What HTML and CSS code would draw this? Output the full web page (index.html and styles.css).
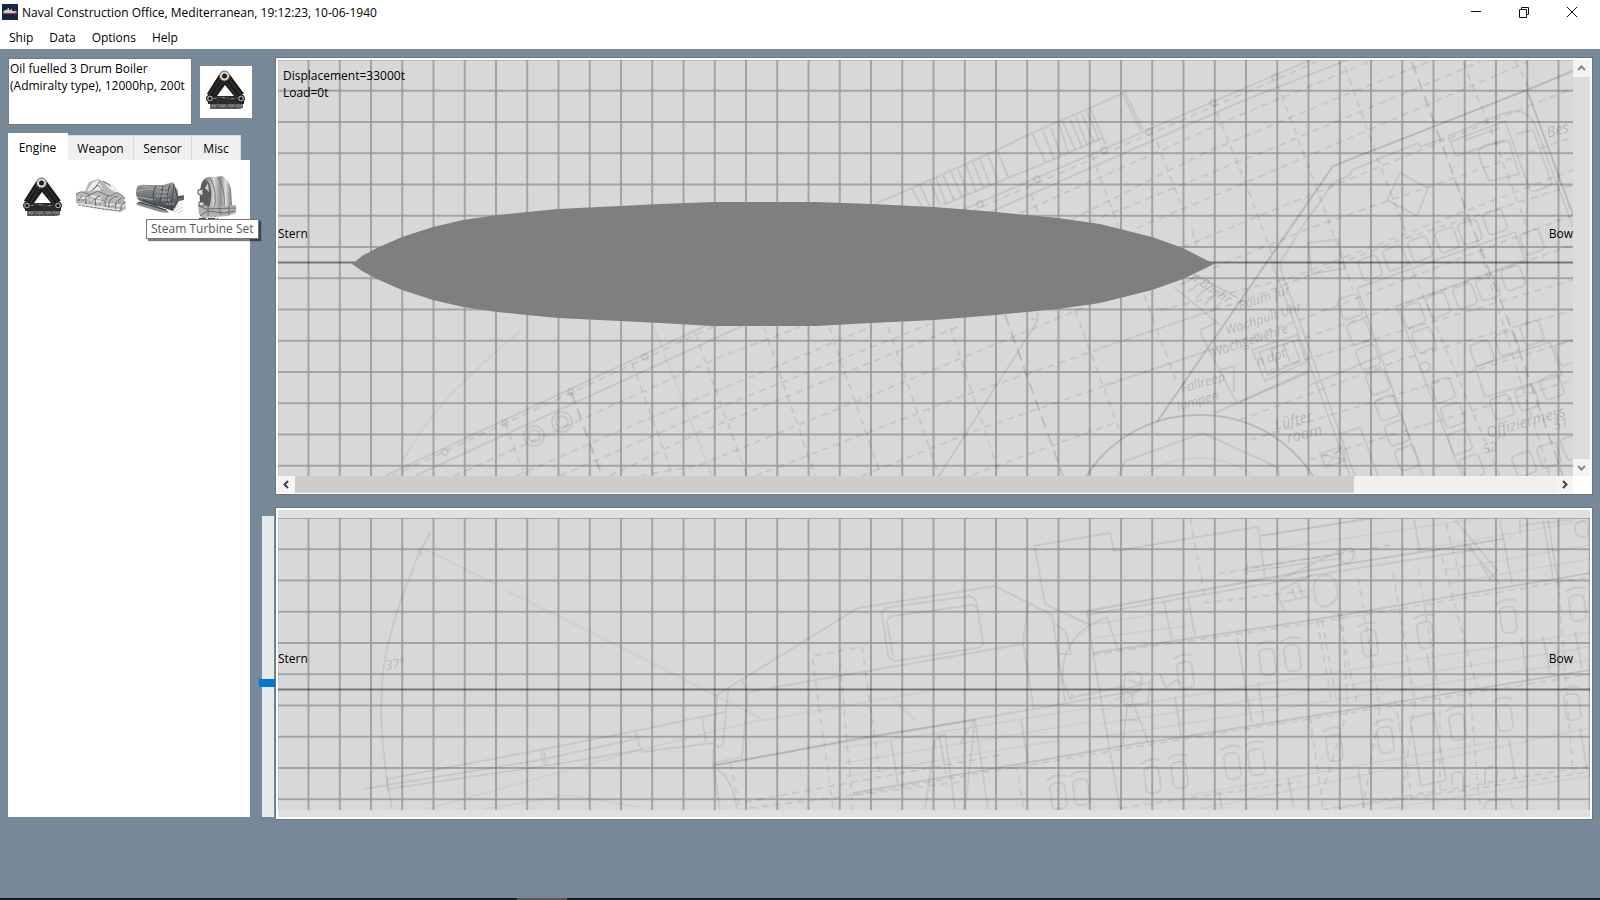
FILE: index.html
```html
<!DOCTYPE html>
<html lang="en">
<head>
  <meta charset="UTF-8" />
  <meta name="viewport" content="width=device-width, initial-scale=1.0"/>
  <title>Naval Construction Office</title>
  <link rel="stylesheet" href="styles.css">
</head>
<body>
  <!-- shared shapes -->
  <svg class="defs" width="0" height="0" aria-hidden="true">
    <defs>
      <linearGradient id="steel" x1="0" y1="0" x2="0" y2="1">
        <stop offset="0" stop-color="#9a9c9e"/>
        <stop offset="0.4" stop-color="#7b7e81"/>
        <stop offset="1" stop-color="#3b3e41"/>
      </linearGradient>
      <linearGradient id="drum" x1="0" y1="0" x2="1" y2="0">
        <stop offset="0" stop-color="#4a4a4a"/>
        <stop offset="0.45" stop-color="#d6d6d6"/>
        <stop offset="0.65" stop-color="#8c8c8c"/>
        <stop offset="0.8" stop-color="#e0e0e0"/>
        <stop offset="1" stop-color="#6e6e6e"/>
      </linearGradient>
      <pattern id="grid-top" x="276.25" y="58.5" width="31.25" height="31.25" patternUnits="userSpaceOnUse">
        <path class="grid-soft" d="M0 1H31.25M1 0V31.25"/>
        <path class="grid-line" d="M0 1H31.25M1 0V31.25"/>
      </pattern>
      <pattern id="grid-side" x="276.25" y="517" width="31.25" height="31.25" patternUnits="userSpaceOnUse">
        <path class="grid-soft" d="M0 1H31.25M1 0V31.25"/>
        <path class="grid-line" d="M0 1H31.25M1 0V31.25"/>
      </pattern>
      <rect id="seat" x="-10" y="-11" width="20" height="22" rx="4" transform="rotate(-20)"/>
      <g id="port" transform="rotate(-8)">
        <rect x="-7" y="-13" width="15" height="26" rx="5"/>
        <path d="M-9 -17Q0 -23 11 -18"/>
      </g>
      <symbol id="boiler" viewBox="0 0 50 50">
        <path d="M24 12L12 31M25 12L39 31" stroke="#1d1d1d" stroke-width="12"/>
        <path d="M20 13L7 32M23 15L11 33M29 13L43 32M27 17L38 32" stroke="#4a4a4a" stroke-width="1" stroke-dasharray="2 1"/>
        <path d="M25 19L17 30H34Z" fill="#fff"/>
        <path d="M8 33L15 30H36L44 33V38H8Z" fill="#2a2a2a"/>
        <path d="M10 38H43V42L38 43H10Z" fill="#6a6a68"/>
        <path d="M13 33L20 31L30 33L39 32M12 40H41" stroke="#8b8b88" stroke-width="1" stroke-dasharray="4 2 1 2" fill="none"/>
        <path d="M11 42H41M18 35V42M27 34V41M35 36V42" stroke="#3c3c3c" stroke-width="1" stroke-dasharray="3 1"/>
        <circle cx="24.500" cy="10" r="5" fill="#d8d8d6" stroke="#555"/>
        <circle cx="24.500" cy="10" r="2.500" fill="#222"/>
        <circle cx="10" cy="32.500" r="3.500" fill="#999" stroke="#111"/>
        <circle cx="10" cy="32.500" r="1.500" fill="#111"/>
        <circle cx="41" cy="32.500" r="3.500" fill="#999" stroke="#111"/>
        <circle cx="41" cy="32.500" r="1.500" fill="#111"/>
      </symbol>
      <symbol id="diesel" viewBox="0 0 50 50">
        <path d="M0 20L9 18L13 9L22 6L34 11L37 17L48 23L50 36L44 39L30 37L12 34L0 30Z" fill="#b8b8b6"/>
        <path d="M11 18L16 10L22 7L27 17ZM29 11L35 17L44 21L38 12Z" fill="#ededeb"/>
        <path d="M15 18L22 12L27 18M24 8L17 17M27 8L35 13" stroke="#7a7a78" fill="none"/>
        <path d="M3 25H12M14 27L27 29M29 31L48 33M4 31L44 37M15 23L25 25" stroke="#e4e4e2" stroke-width="2"/>
        <path d="M0 22Q4 17 9 20T18 20T28 21T38 21T49 26" stroke="#777" fill="none"/>
        <path d="M2 28L6 23M10 31Q8 23 14 22M20 33Q17 24 24 23M30 34Q27 27 33 22M33 35Q31 25 42 23M40 36Q37 29 46 25M45 37Q44 30 50 29" stroke="#6a6a68" fill="none"/>
        <path d="M1 27H8M13 30L19 26M23 32L28 26M35 34L46 28M2 32L27 36L46 38" stroke="#7d7d7b" fill="none" stroke-dasharray="3 1"/>
      </symbol>
      <symbol id="turbine" viewBox="0 0 50 50">
        <path d="M1 30L9 28L32 37L34 40L25 39L2 32Z" fill="#8b8e90"/>
        <path d="M2 14Q4 11 12 12L28 12L38 9L43 18L43 23L49 22V27L44 28L38 38L29 35L5 28Q-1 24 2 14Z" fill="url(#steel)"/>
        <path d="M1 19Q9 15 21 17M2 24L20 27M6 13L18 15" stroke="#a7aaac" fill="none"/>
        <path d="M21 13Q16 20 20 31M28 13L24 33M35 12Q30 22 33 36M39 11L36 34M40 15L43 28" stroke="#45494c" fill="none"/>
        <path d="M22 15H34M22 19H34M21 23H32M27 27H35M31 31H39" stroke="#babdc0" stroke-dasharray="2 1"/>
        <path d="M3 29L31 37M43 24H48M8 27L22 33" stroke="#33373a"/>
        <path d="M39 39L48 34M43 40L48 37M38 36L44 33" stroke="#999" stroke-dasharray="1 1"/>
      </symbol>
      <symbol id="gearbox" viewBox="0 0 50 50">
        <path d="M8 9Q11 3 20 4L28 3Q34 5 37 16L38 34L33 41L12 40L6 31Q5 17 8 9Z" fill="url(#drum)"/>
        <path d="M8 10Q12 4 16 12Q19 23 15 34L8 33Q5 20 8 10Z" fill="#5c5c5c"/>
        <path d="M11 15L14 10L15 19Z" fill="#ccc"/>
        <path d="M16 5Q24 18 20 37M24 4Q32 17 30 36" stroke="#777" fill="none"/>
        <path d="M4 32L10 31L14 34L30 33L42 32V40L34 43L8 45L5 41Z" fill="#b2b2b0"/>
        <path d="M5 33L12 36L42 35M6 43L13 38L30 40L41 38M14 34V43M25 34L27 42M35 33V42" stroke="#6c6c6a" fill="none"/>
        <path d="M4 17L9 16V23L4 21ZM5 29H10V33H5Z" fill="#ddd" stroke="#555"/>
        <path d="M5 46H24" stroke="#444" stroke-width="2" stroke-dasharray="7 2"/>
      </symbol>
    </defs>
  </svg>

  <header class="title-bar">
    <svg class="app-icon" viewBox="0 0 16 16" aria-hidden="true">
      <rect width="16" height="16" fill="#14264a"/>
      <path d="M1 8L3 6H5L6 4H7V6H9V5H10V7H14L15 8L14 9H2Z" fill="#c8ced8"/>
      <path d="M1 9H15L14 10H2Z" fill="#c23a36"/>
      <path d="M13 2V14" stroke="#97384a" stroke-dasharray="1 2"/>
    </svg>
    <h1>Naval Construction Office, Mediterranean, 19:12:23, 10-06-1940</h1>
    <div class="window-buttons">
      <button type="button" aria-label="Minimize">
        <svg viewBox="0 0 12 12"><path d="M1 5.500H11"/></svg>
      </button>
      <button type="button" aria-label="Restore">
        <svg viewBox="0 0 12 12"><path d="M1.500 3.500H8.500V11.500H1.500ZM3.500 3.500V1.500H10.500V8.500H8.500"/></svg>
      </button>
      <button type="button" aria-label="Close">
        <svg viewBox="0 0 12 12"><path d="M1 1L11 11M11 1L1 11"/></svg>
      </button>
    </div>
  </header>

  <nav class="menu">
    <button type="button">Ship</button>
    <button type="button">Data</button>
    <button type="button">Options</button>
    <button type="button">Help</button>
  </nav>

  <main class="workspace">
    <aside class="parts">
      <div class="selected">
        <textarea class="part-info" aria-label="Selected part" readonly>Oil fuelled 3 Drum Boiler (Admiralty type), 12000hp, 200t</textarea>
        <div class="part-picture"><svg class="part"><use href="#boiler"/></svg></div>
      </div>

      <div class="tabs" role="tablist">
        <button type="button" role="tab" class="tab active" aria-selected="true">Engine</button>
        <button type="button" role="tab" class="tab tab-weapon" aria-selected="false">Weapon</button>
        <button type="button" role="tab" class="tab tab-sensor" aria-selected="false">Sensor</button>
        <button type="button" role="tab" class="tab tab-misc" aria-selected="false">Misc</button>
      </div>
      <div class="part-list" role="tabpanel">
        <button type="button" aria-label="Boiler"><svg class="part"><use href="#boiler"/></svg></button>
        <button type="button" aria-label="Diesel engine"><svg class="part"><use href="#diesel"/></svg></button>
        <button type="button" class="hovered" aria-label="Steam turbine">
          <svg class="part"><use href="#turbine"/></svg>
          <span class="tooltip" role="tooltip">Steam Turbine Set</span>
        </button>
        <button type="button" aria-label="Gearbox"><svg class="part"><use href="#gearbox"/></svg></button>
      </div>
    </aside>

    <div class="views">
      <section class="view view-top">
        <svg class="sheet" viewBox="278 60 1295 416" role="img" aria-label="Deck plan">
          <g class="plan">
            <!-- deck edge -->
            <path d="M385 476L703 327L967 208L1310 60M415 476L740 327L993 211L1240 102L1347 60"/>
            <path class="dash" d="M392 476L706 330L970 212L1316 62"/>
            <g>
              <circle cx="445" cy="452" r="3"/><circle cx="505" cy="423" r="3"/><circle cx="571" cy="392" r="3"/>
              <circle cx="645" cy="357" r="3"/><circle cx="980" cy="204" r="3"/><circle cx="1037" cy="179" r="3"/>
              <circle cx="1104" cy="150" r="3"/><circle cx="1149" cy="132" r="3"/><circle cx="1213" cy="103" r="3"/>
              <circle cx="1275" cy="77" r="3"/>
              <circle cx="534" cy="436" r="10"/><circle cx="534" cy="436" r="6"/>
              <circle cx="562" cy="422" r="10"/><circle cx="562" cy="422" r="6"/>
            </g>
            <path class="faint" d="M403 460Q430 413 463 383Q490 355 522 330"/>
            <path d="M939 476L1038 320L1031 319M1038 320L1037 312"/>
            <!-- ladders -->
            <path d="M875 204L912 188L997 150L1032 133L1090 108L1125 92L1143 130M1123 94L1141 132M943 205L1008 178L1045 163L1103 138M912 188L922 207M997 150L1009 179M1032 133L1046 163M1090 108L1106 145"/>
            <path d="M920 185L930 207M930 181L940 205M936 178L946 204M943 175L954 200M951 172L962 197M958 169L968 194M966 165L976 191M973 162L983 188M980 159L990 185M988 155L998 182M1043 131L1054 159M1051 128L1061 156M1059 123L1068 152M1063 122L1075 150M1070 119L1082 147M1076 117L1087 145M1082 114L1094 142M1087 112L1099 140"/>
            <!-- planking -->
            <path class="dash" d="M454 476L600 411L720 357L800 327M516 476L640 422L780 365L870 327M560 476L700 415L930 324M610 476L700 432L960 326M640 476L700 465L860 400L1030 330L1130 288M755 476L960 397L1213 310M862 476L982 428L1210 350M972 475L1117 422M1020 213L1173 145L1233 118L1373 60M1060 225L1200 155L1340 97L1433 60M1090 222L1280 145L1480 62M1137 228L1240 185L1527 62M1183 247L1330 187L1573 88M1213 268L1310 228L1573 137M1160 310L1290 278L1573 170M1100 348L1245 300L1400 240L1573 185M1105 385L1300 320L1573 215M1270 350L1573 245M1270 370L1573 280M1240 420L1400 360L1573 310M1250 440L1573 340M1310 460L1573 380"/>
            <path class="dash" d="M505 423L525 476M632 363L673 476M695 333L747 476M764 327L815 476M829 327L879 470M888 327L939 476M950 327L998 470M1075 310L1122 437M1144 295L1177 383M1031 194L1038 212M1092 155L1119 228M1157 142L1180 203M1192 230L1197 247M1217 113L1247 187L1278 270M1277 83L1320 197L1353 290M1345 67L1383 173L1408 237M1463 62L1492 133L1527 227M1515 60L1530 90M1408 260L1500 476M1480 250L1550 476"/>
            <path class="faint" d="M653 325L712 476"/>
            <path class="heavy" d="M571 392L602 476M1005 315L1063 476M1412 62L1467 213L1513 333L1563 476"/>
            <!-- barbette -->
            <path class="solid" d="M1086 476L1100 458A133 133 0 0 1 1200 415A133 133 0 0 1 1313 476"/>
            <path d="M1118 476L1125 461L1203 433L1277 467L1280 476"/>
            <path class="faint" d="M1143 476A95 95 0 0 1 1254 476"/>
            <!-- deckhouse -->
            <path class="solid" d="M1573 71L1527 90L1333 166L1157 422M1527 90L1573 215"/>
            <path d="M1445 138L1420 147L1418 143L1352 170L1350 175L1333 183L1300 230L1280 263L1282 273L1355 476M1270 257L1307 357L1350 476M1357 288L1423 476M1397 307L1462 476M1357 288L1515 232L1525 260L1400 305M1215 413L1310 370M1310 385L1395 350"/>
            <path d="M1448 136L1502 114Q1525 105 1535 125L1573 227M1450 142L1505 121L1530 190Q1533 194 1552 184L1533 130L1516 134M1448 137L1456 156L1505 140M1465 140L1500 128"/>
            <path d="M1400 173L1428 188L1417 216L1387 200ZM1308 243L1338 239L1345 268L1312 274ZM1485 145L1509 141L1519 174L1490 181Q1478 160 1479 150Z"/>
            <path d="M1175 288L1220 325M1190 272L1238 298M1180 285L1200 275M1188 292L1200 283M1196 298L1207 288M1204 305L1214 295M1211 312L1222 302M1200 330L1218 322M1200 332L1236 402M1220 370L1234 366L1234 392M1240 402L1310 372"/>
            <path d="M1252 350L1297 335L1306 362L1265 381ZM1259 352L1293 341L1300 361L1268 375ZM1271 350L1280 371M1284 346L1291 365M1475 367L1550 342L1562 375L1485 397ZM1320 454L1342 446L1346 460L1326 467ZM1320 454L1346 460M1342 446L1326 467M1340 434L1360 427L1378 476"/>
            <g>
              <use href="#seat" x="1370" y="268"/><use href="#seat" x="1395" y="258"/><use href="#seat" x="1420" y="249"/>
              <use href="#seat" x="1447" y="240"/><use href="#seat" x="1470" y="232"/><use href="#seat" x="1495" y="222"/>
              <use href="#seat" x="1532" y="242"/>
              <use href="#seat" x="1413" y="315"/><use href="#seat" x="1438" y="305"/><use href="#seat" x="1465" y="296"/>
              <use href="#seat" x="1488" y="288"/><use href="#seat" x="1513" y="278"/>
              <use href="#seat" x="1350" y="307"/><use href="#seat" x="1359" y="332"/><use href="#seat" x="1368" y="357"/>
              <use href="#seat" x="1378" y="382"/><use href="#seat" x="1387" y="408"/><use href="#seat" x="1397" y="433"/>
              <use href="#seat" x="1407" y="458"/>
              <use href="#seat" x="1424" y="340"/><use href="#seat" x="1443" y="390"/><use href="#seat" x="1453" y="415"/>
              <use href="#seat" x="1460" y="442"/><use href="#seat" x="1472" y="467"/>
              <use href="#seat" x="1482" y="353"/><use href="#seat" x="1507" y="343"/><use href="#seat" x="1532" y="333"/>
              <use href="#seat" x="1567" y="353"/>
              <use href="#seat" x="1502" y="407"/><use href="#seat" x="1527" y="398"/><use href="#seat" x="1552" y="387"/>
              <use href="#seat" x="1524" y="464"/><use href="#seat" x="1549" y="455"/><use href="#seat" x="1573" y="447"/>
              <circle cx="1425" cy="367" r="5"/>
            </g>
          </g>
          <g class="plan-text">
            <text transform="translate(1190 279) rotate(34)">n Bbehr</text>
            <text transform="translate(1240 310) rotate(-18)">Raum für</text>
            <text transform="translate(1227 335) rotate(-18)">Wachpult Uhr</text>
            <text transform="translate(1213 357) rotate(-18)">Wachgewehre</text>
            <text transform="translate(1258 366) rotate(-18)">n dpt</text>
            <text transform="translate(1182 393) rotate(-16)">Fallreep</text>
            <text transform="translate(1178 411) rotate(-16)">lampen</text>
            <text class="big" transform="translate(1276 430) rotate(-14)">Lüfter</text>
            <text class="big" transform="translate(1288 443) rotate(-14)">room</text>
            <text class="big" transform="translate(1548 138) rotate(-16)">Bes</text>
            <text class="big" transform="translate(1488 438) rotate(-16)">Offiziermess</text>
            <text transform="translate(1484 454) rotate(-16)">52</text>
            <text transform="translate(1555 430) rotate(-16)">51</text>
          </g>
          <rect x="278" y="60" width="1295" height="416" fill="url(#grid-top)"/>
          <path class="axis" d="M278 262.500H1573"/>
          <polygon class="hull" points="352,264 362,256 377,248 402,237 433,227 463,220 497,215 527,212 558,209 620,206 660,204 713,202 816,202 871,204 934,207 996,212 1058,218 1100,224 1120,229 1152,237 1183,248 1214,264 1183,279 1152,290 1120,298 1100,303 1058,309 996,315 934,320 871,323 816,326 713,326 660,323 620,321 558,318 527,315 497,312 463,307 433,300 402,290 377,279 362,271"/>
          <text class="label" x="283" y="80">Displacement=33000t</text>
          <text class="label" x="283" y="97">Load=0t</text>
          <text class="label" x="278" y="238">Stern</text>
          <text class="label end" x="1573" y="238">Bow</text>
        </svg>
        <div class="scroll-v">
          <button type="button" aria-label="Scroll up"><svg viewBox="0 0 9 9"><path d="M1 6L4.500 2.500L8 6"/></svg></button>
          <button type="button" aria-label="Scroll down"><svg viewBox="0 0 9 9"><path d="M1 3L4.500 6.500L8 3"/></svg></button>
        </div>
        <div class="scroll-h">
          <button type="button" aria-label="Scroll left"><svg viewBox="0 0 9 9"><path d="M6 1L2.500 4.500L6 8"/></svg></button>
          <div class="track"><div class="thumb"></div></div>
          <button type="button" aria-label="Scroll right"><svg viewBox="0 0 9 9"><path d="M3 1L6.500 4.500L3 8"/></svg></button>
        </div>
      </section>

      <div class="side-row">
        <input class="height-slider" type="range" min="0" max="200" value="111" aria-label="Deck level">
        <section class="view view-side">
          <svg class="sheet" viewBox="278 518 1312 292" role="img" aria-label="Side elevation">
            <g class="plan side">
              <!-- elevation arc and gun barrel -->
              <path d="M430 533L419 553L402 597Q390 630 383 670Q380 710 382 733Q384 765 392 809M417 556L422 547L420 556"/>
              <path class="faint" d="M422 548L497 585M505 590L612 643L715 695L763 720"/>
              <path d="M387 779L540 750L640 730L725 712M387 789L545 766L640 750M363 789L540 760L640 738M540 750L545 766M543 748L547 765M635 731L642 752L713 743M702 717L706 742M387 778L387 790"/>
              <path class="faint" d="M427 809L640 750L747 723L930 691M485 809L568 795L640 807M892 697L915 721"/>
              <!-- turret -->
              <path d="M717 695L858 608L995 586L1052 615L1065 702M748 692L1023 644L1028 603M1023 644L1034 709M713 765L1034 709L1140 690M748 692L742 757L713 763M717 695L713 765L720 809M728 690L723 745Q718 750 714 743M742 680L748 692M713 767Q732 775 737 809"/>
              <path d="M884 608L970 596Q976 598 977 605L983 643Q983 646 978 648L896 661Q890 660 888 655L882 615Q882 609 888 608M887 622Q888 617 893 616L972 605Q977 605 978 612M887 622L893 656M1055 624Q1067 630 1068 640L1071 654H1060"/>
              <path class="dash" d="M833 808L812 656L862 647L880 777M840 662L853 810M730 763L740 809M745 802L1000 755M750 808L960 782"/>
              <!-- bridge deck -->
              <path d="M1033 546L1110 533L1114 551L1258 527L1265 578M1035 548L1045 604L1090 625L1107 617L1118 650M1090 625Q1060 645 1063 680L1070 700M1258 536L1400 514"/>
              <path class="solid" d="M1087 611L1340 565L1503 539M1093 653L1313 620L1590 573M713 766L860 738L975 720M853 793L1140 743L1183 737L1380 705L1590 670"/>
              <path d="M1087 615L1340 571L1480 549"/>
              <path class="dash" d="M1093 655L1313 623L1590 577M853 795L1140 746L1380 708L1590 674M1190 518L1206 603L1313 590M1120 808L1300 782M1340 808L1590 772M1310 812L1590 766M1218 574L1390 545"/>
              <path class="faint" d="M1093 638L1193 625M1090 625L1193 608M1100 710L1590 632M1100 724L1590 647M1100 737L1590 660M1262 551L1500 515M1261 536L1370 518M1415 550L1590 520M1445 570L1590 545M1450 583L1590 559M1385 809L1590 776M1200 809L1590 728M1190 795L1500 741M842 748L1090 708M845 763L1090 722M847 776L1060 740"/>
              <path d="M1087 611L1093 653L1120 809M1237 638L1252 723M1164 602L1172 640M1188 598L1195 636M1258 682L1264 722M1175 697L1181 736M1427 653L1430 670M1521 638L1528 680M1543 636L1550 674M1575 631L1582 668M1509 740L1516 780M1580 728L1587 770M1358 767L1364 808M1288 778L1294 808M1219 792L1222 809M891 741L898 784M939 734L946 775M1021 720L1028 762M1414 520L1420 553M1500 520L1512 584M1543 520L1553 577M1548 520L1557 576"/>
              <path class="dash" d="M1358 578L1380 707L1363 808M1393 572L1415 703L1402 793M1418 568L1440 700V795M1310 717L1323 808M1442 557L1477 687M1317 620L1332 703M1322 620L1337 703M1338 613L1357 703M1342 613L1348 709L1323 790M1558 580L1573 773M1470 690L1480 809M1395 700L1412 800M1460 577L1445 520M1016 765L1024 809"/>
              <path d="M925 809L935 740L945 734L955 809M960 745Q967 730 975 720L965 809M975 720L988 809M1410 718L1434 713L1446 780L1421 786ZM1455 520L1497 570L1490 580L1470 545M1467 545L1500 584M1484 809Q1486 800 1492 800L1510 799L1513 809M1452 785V775Q1458 768 1463 775V792M1485 785V770Q1490 764 1497 768V785"/>
              <!-- light guns -->
              <path d="M1125 675Q1135 668 1142 676L1140 690Q1130 697 1124 690ZM1122 690L1150 682L1148 704L1125 705ZM1070 698L1125 686M1072 694V700M1160 674L1166 688L1176 680L1182 684M1128 700L1123 745M1132 700L1148 742M1115 700L1125 695M1122 720H1140M1128 680L1140 684M1120 702L1134 694L1130 708"/>
              <path d="M1315 580Q1325 570 1335 580L1338 595Q1330 610 1320 606Q1312 600 1315 580ZM1280 590L1312 575M1282 602L1310 596M1276 592L1284 610M1292 588L1296 600M1298 584L1303 596M1340 556Q1350 542 1354 552Q1353 567 1342 562ZM1246 568L1340 554M1247 572L1342 558M1247 563V575M1280 580L1345 548M1575 525Q1583 518 1588 525V535Q1580 540 1575 532ZM1520 520V534M1522 525L1572 520"/>
              <g>
                <use href="#port" x="1152" y="780"/><use href="#port" x="1179" y="775"/><use href="#port" x="1232" y="766"/>
                <use href="#port" x="1256" y="762"/><use href="#port" x="1267" y="662"/><use href="#port" x="1292" y="658"/>
                <use href="#port" x="1185" y="675"/><use href="#port" x="1334" y="748"/><use href="#port" x="1385" y="740"/>
                <use href="#port" x="1369" y="643"/><use href="#port" x="1425" y="635"/><use href="#port" x="1457" y="727"/>
                <use href="#port" x="1504" y="718"/><use href="#port" x="1508" y="620"/><use href="#port" x="1577" y="608"/>
                <use href="#port" x="1572" y="707"/><use href="#port" x="1058" y="796"/><use href="#port" x="1081" y="792"/>
              </g>
            </g>
            <g class="plan-text">
              <text transform="translate(386 670) rotate(-8)">37°</text>
            </g>
            <rect x="278" y="518" width="1312" height="292" fill="url(#grid-side)"/>
            <path class="axis" d="M278 689.500H1590"/>
            <text class="label" x="278" y="663">Stern</text>
            <text class="label end" x="1573" y="663">Bow</text>
          </svg>
        </section>
      </div>
    </div>
  </main>

  <footer class="taskbar"><span></span></footer>
</body>
</html>
```
FILE: styles.css
```css
* {
  box-sizing: border-box;
}

body {
  margin: 0;
  min-height: 100vh;
  display: flex;
  flex-direction: column;
  font-family: "Open Sans", "Noto Sans", sans-serif;
  font-size: 12px;
  color: #000;
  background: #778899;
}

button {
  margin: 0;
  padding: 0;
  border: 0;
  background: none;
  font: inherit;
  color: inherit;
}

.defs {
  position: absolute;
}

/* title and menu */

.title-bar {
  display: flex;
  align-items: center;
  height: 24px;
  padding-left: 2px;
  background: #fff;
}

.app-icon {
  width: 16px;
  height: 16px;
}

.title-bar h1 {
  flex: 1;
  margin: 0 0 0 4px;
  font-size: 12px;
  font-weight: 400;
}

.window-buttons {
  display: flex;
  padding-right: 4px;
}

.window-buttons button {
  width: 48px;
  height: 24px;
}

.window-buttons svg {
  display: block;
  width: 12px;
  height: 12px;
  margin: auto;
  fill: none;
  stroke: #111;
}

.menu {
  display: flex;
  gap: 16px;
  height: 25px;
  padding: 1px 0 0 9px;
  background: #fff;
}

/* layout */

.workspace {
  flex: 1;
  display: grid;
  grid-template-columns: 244px 1fr;
  column-gap: 7px;
  align-items: stretch;
  align-content: start;
  padding: 9px 8px 0;
}

.parts {
  display: flex;
  flex-direction: column;
  padding-bottom: 2px;
}

.selected {
  display: flex;
  gap: 8px;
  height: 67px;
  margin-bottom: 8px;
}

.part-info {
  width: 184px;
  padding: 1px;
  border: 1px solid #7a7a7a;
  background: #fff;
  color: #000;
  font: inherit;
  line-height: 17px;
  resize: none;
  overflow: hidden;
}

.part-picture {
  width: 52px;
  height: 52px;
  margin-top: 8px;
  background: #fff;
}

.part {
  display: block;
  width: 50px;
  height: 50px;
}

/* tabs */

.tabs {
  display: flex;
  align-items: flex-end;
  height: 27px;
}

.tab {
  width: 60px;
  height: 25px;
  border: 1px solid #d9d9d9;
  border-width: 1px 1px 0 0;
  background: #f0f0f0;
}

.tab.active {
  height: 27px;
  border-color: #fff;
  background: #fff;
}

.tab-weapon {
  width: 66px;
}

.tab-sensor {
  width: 58px;
}

.tab-misc {
  width: 49px;
}

.part-list {
  flex: 1;
  display: grid;
  grid-template-columns: repeat(4, 50px);
  grid-auto-rows: 50px;
  gap: 9px;
  margin-right: 2px;
  padding: 13px 9px;
  background: #fff;
}

.hovered {
  position: relative;
}

.tooltip {
  position: absolute;
  z-index: 1;
  top: 46px;
  left: 11px;
  padding: 0 4px;
  border: 1px solid #767676;
  background: #fff;
  box-shadow: 2px 2px 1px rgba(0, 0, 0, 0.5);
  color: #575757;
  line-height: 18px;
  white-space: nowrap;
}

/* drawing views */

.view {
  border: 2px solid #fff;
  box-shadow: 0 0 0 1px rgba(90, 100, 110, 0.5);
}

.view-top {
  display: grid;
  grid-template-columns: 1fr 17px;
  grid-template-rows: auto 17px;
  margin-left: 17px;
  border-bottom-width: 1px;
  background: #fff;
}

.side-row {
  display: flex;
  gap: 1px;
  margin-top: 14px;
}

.view-side {
  flex: 1;
  padding: 8px 0 7px;
  background: #e0e0e0;
}

.sheet {
  display: block;
  width: 100%;
  background: #d8d8d8;
}

.plan {
  fill: none;
  stroke: #000;
  stroke-width: 2;
  stroke-opacity: 0.08;
}

.plan.side {
  stroke-opacity: 0.07;
}

.plan .solid {
  stroke-opacity: 0.14;
}

.plan.side .solid {
  stroke-opacity: 0.1;
}

.plan .faint {
  stroke-opacity: 0.04;
}

.plan .dash {
  stroke-dasharray: 7 5;
}

.plan .heavy {
  stroke-opacity: 0.12;
  stroke-dasharray: 12 6;
}

.plan-text {
  fill: #000;
  fill-opacity: 0.18;
  font-size: 13px;
  font-style: italic;
}

.plan-text .big {
  font-size: 15px;
}

.grid-soft {
  stroke: #000;
  stroke-opacity: 0.15;
  stroke-width: 2;
}

.grid-line {
  stroke: #000;
  stroke-opacity: 0.22;
}

.axis {
  stroke: #000;
  stroke-width: 2;
  stroke-opacity: 0.45;
}

.hull {
  fill: #7f7f7f;
}

.label {
  font-size: 12px;
}

.end {
  text-anchor: end;
}

/* scrollbars */

.scroll-v {
  display: flex;
  flex-direction: column;
  justify-content: space-between;
  background: #dcdcdc;
}

.scroll-h {
  grid-column: 1;
  display: flex;
  background: #f0f0f0;
}

.scroll-v button,
.scroll-h button {
  width: 17px;
  height: 17px;
  background: #f4f4f4;
}

.scroll-v svg,
.scroll-h svg {
  display: block;
  width: 9px;
  height: 9px;
  margin: auto;
  fill: none;
  stroke: #444;
  stroke-width: 2;
}

.scroll-v svg {
  stroke: #888;
}

.track {
  flex: 1;
}

.thumb {
  width: 84%;
  height: 17px;
  background: #cdcdcd;
}

.height-slider {
  appearance: none;
  writing-mode: vertical-lr;
  width: 16px;
  height: auto;
  margin: 8px 0 2px;
  background: linear-gradient(to right, transparent 3px, #e5eaea 3px, #e5eaea 15px, transparent 15px);
}

.height-slider::-webkit-slider-thumb {
  appearance: none;
  width: 16px;
  height: 8px;
  background: #0078d7;
}

.taskbar {
  height: 2px;
  background: #15171c;
}

.taskbar span {
  display: block;
  width: 50px;
  height: 2px;
  margin-left: 517px;
  background: #5a5458;
}
```
